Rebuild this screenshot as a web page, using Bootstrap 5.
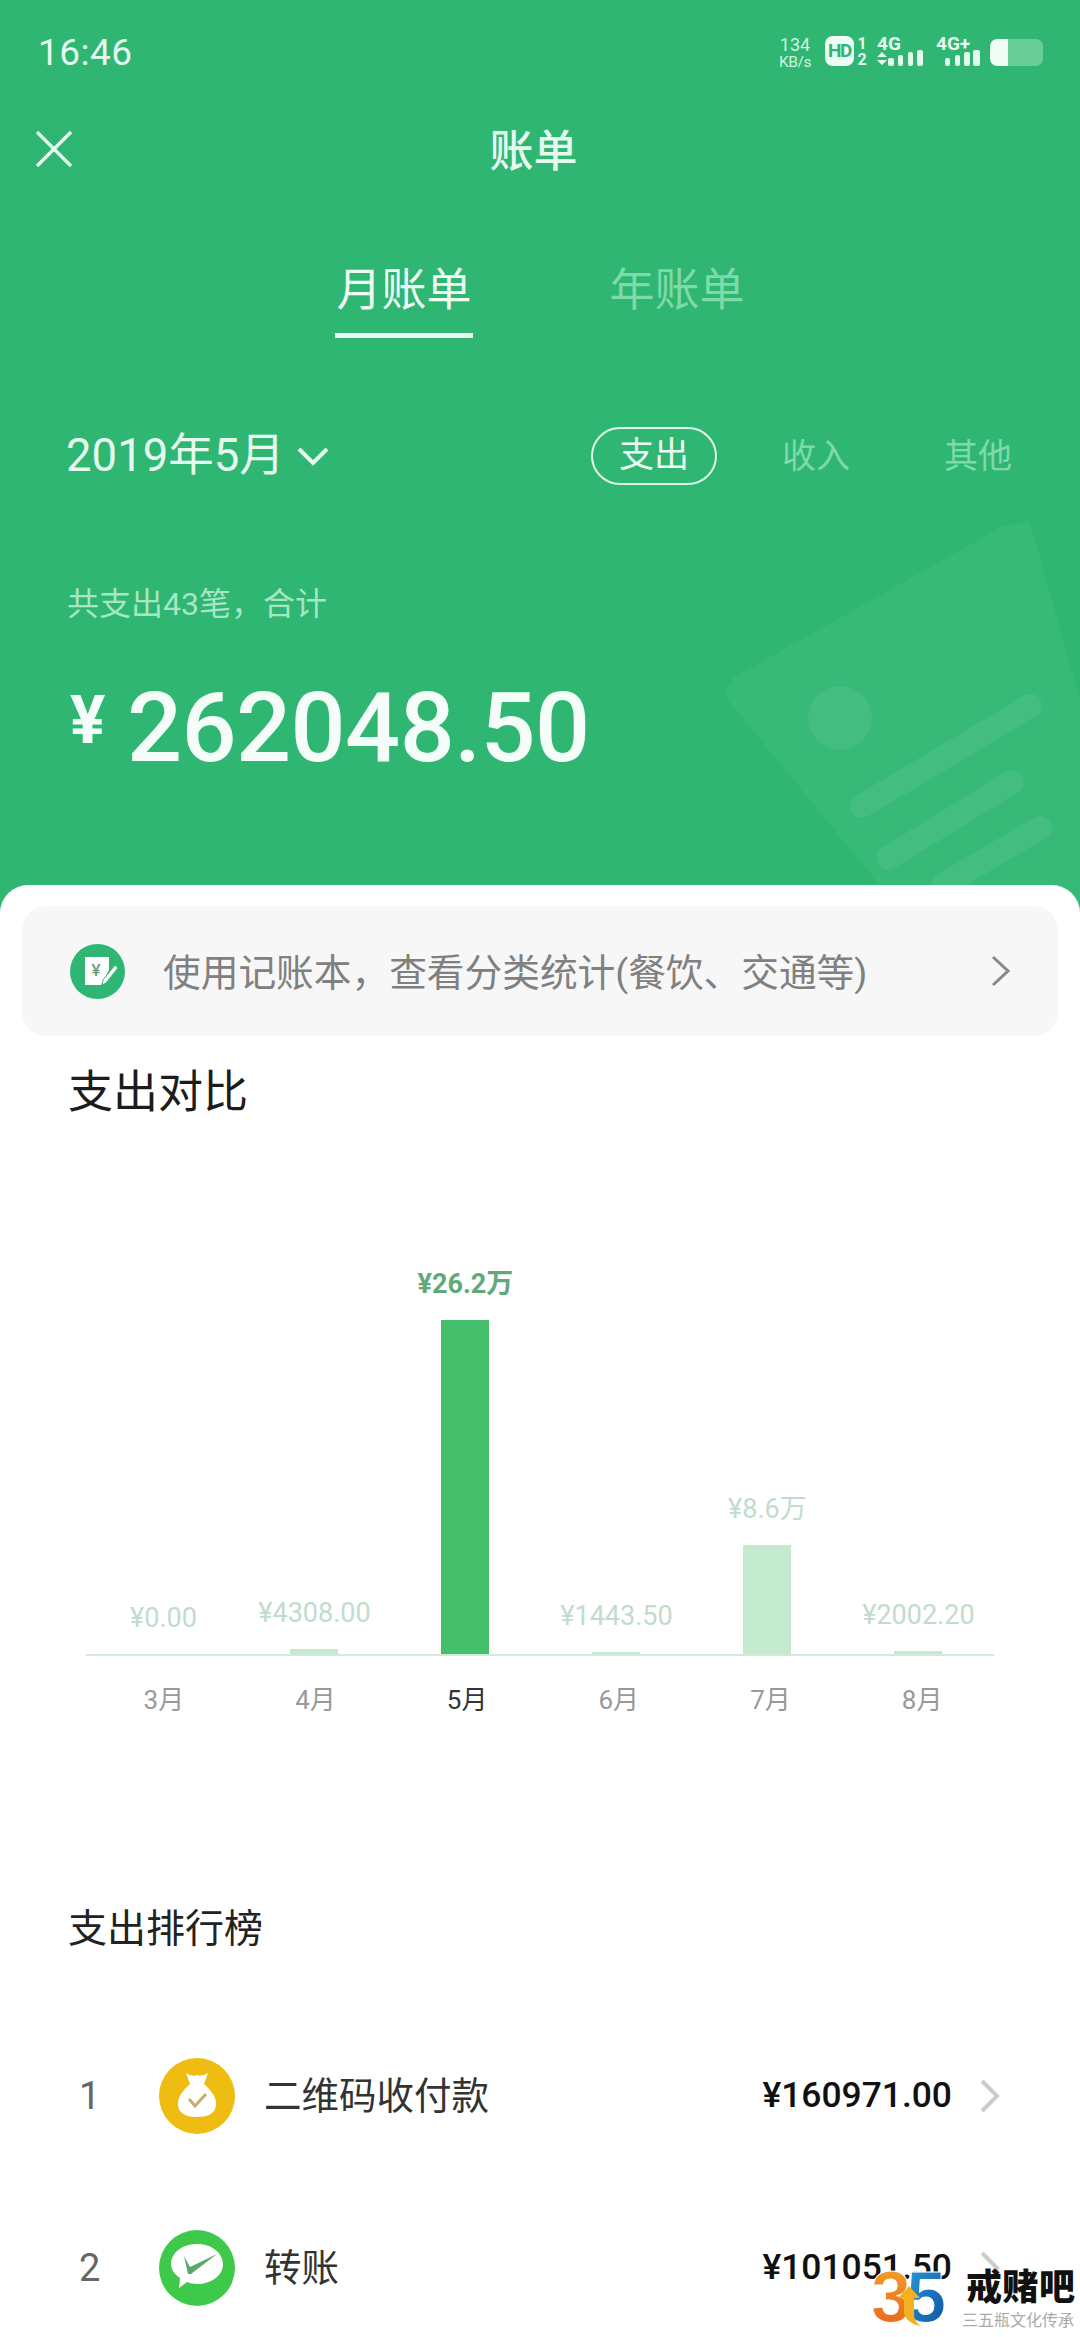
<!DOCTYPE html>
<html lang="zh-CN">
<head>
  <meta charset="UTF-8" />
  <meta name="viewport" content="width=device-width, initial-scale=1.0" />
  <title>账单</title>
  <link href="https://cdn.jsdelivr.net/npm/bootstrap@5.3.0/dist/css/bootstrap.min.css" rel="stylesheet" />
  <style>
    html, body { margin: 0; background: #fff; }
    body { font-family: Roboto, "Noto Sans CJK SC", sans-serif; }
    .app-frame { width: 1080px; height: 2337px; overflow: hidden; position: relative; background: #fff; }

    /* green header, runs on behind the rounded top of the sheet */
    .bill-head { height: 920px; background: #2eb672; color: #e6f9ee; position: relative; overflow: hidden; }
    .bill-deco { position: absolute; left: 0; top: 0; }
    .status-row { height: 106px; padding: 36px 37px 0 38px; }
    .status-time { font-size: 37px; line-height: 34px; letter-spacing: .5px; }
    .status-speed { width: 34px; font-size: 18px; line-height: 17px; text-align: center; color: #d3f3e0; white-space: nowrap; }
    .status-speed span { display: block; }
    .status-speed .speed-unit { margin-top: 1px; font-size: 15.5px; letter-spacing: -.5px; }
    .hd-chip { width: 29px; height: 30px; margin-left: 13px; border-radius: 8px; background: #eefbf3; color: #2eb672; font-size: 19px; font-weight: 700; line-height: 30px; text-align: center; letter-spacing: -1.5px; }
    .sim-nums { width: 10px; margin-left: 3px; font-size: 16px; font-weight: 700; line-height: 16px; text-align: center; }
    .batt-box { width: 53px; height: 27px; margin: 3px 0 0 10px; border-radius: 7px; background: #69cd98; overflow: hidden; }
    .batt-fill { width: 18px; height: 100%; background: #f1fcf5; border-radius: 7px 0 0 7px; }

    .nav-row { height: 86px; padding-left: 35px; }
    .nav-title { flex: 1; margin-right: 86px; padding-top: 5px; font-size: 44px; line-height: 60px; text-align: center; font-weight: 500; }

    .tab-row { margin-top: 69px; padding-left: 335px; }
    .tab-item { width: 138px; padding-bottom: 12px; border-bottom: 5px solid transparent; font-size: 45px; line-height: 60px; text-align: center; color: #7fd9a9; }
    .tab-item + .tab-item { margin-left: 135px; }
    .tab-item.is-on { color: #eefbf3; border-bottom-color: #eefbf3; }

    .filter-row { margin-top: 89px; height: 58px; padding: 0 68px 0 66px; }
    .filter-month { font-size: 45.5px; line-height: 60px; }
    .filter-chev { margin-left: 12px; }
    .filter-pill { width: 126px; height: 58px; padding: 0; margin-right: 65px; border: 2px solid #dff7e9; border-radius: 29px; background: transparent; color: #eefbf3; font-size: 35px; line-height: 54px; }
    .filter-off { font-size: 34px; line-height: 60px; color: #7fd9a9; }
    .filter-off + .filter-off { margin-left: 94px; }

    .sum-note { margin: 97px 0 0 67px; font-size: 32px; line-height: 44px; color: #a6e6c4; }
    .sum-total { margin: 47px 0 0 70px; height: 110px; color: #f4fdf8; }
    .sum-yen { width: 36px; font-size: 66px; line-height: 60px; margin-top: 18px; font-weight: 700; }
    .sum-num { margin-left: 21px; font-size: 97px; line-height: 110px; font-weight: 500; letter-spacing: -.6px; }

    /* white sheet */
    .bill-sheet { position: absolute; left: 0; right: 0; top: 885px; bottom: 0; padding-top: 21px; background: #fff; border-radius: 28px 28px 0 0; }
    .book-tip { height: 130px; margin: 0 22px; padding: 0 47px 0 48px; border-radius: 24px; background: #f7f7f7; }
    .book-text { margin-left: 38px; padding-top: 4px; font-size: 37.7px; color: #808080; white-space: nowrap; }
    .sect-title { margin: 27px 0 0 68px; font-size: 45px; line-height: 60px; color: #1c1c1c; }

    .chart-plot { height: 533px; margin-left: 86px; width: 908px; padding-left: 2px; border-bottom: 2px solid #d5e8dc; }
    .chart-col { display: flex; flex-direction: column; align-items: center; justify-content: flex-end; height: 100%; }
    .chart-val { margin-bottom: 20px; font-size: 27px; line-height: 32px; color: #c2dccb; white-space: nowrap; }
    .chart-val.is-on { color: #5fa97a; font-weight: 700; }
    .chart-bar { width: 48px; background: #c4ead0; }
    .chart-bar.is-on { background: #45bf6c; }
    .chart-months { margin: 26px 0 0 88px; width: 910px; }
    .chart-mon { font-size: 26px; line-height: 36px; text-align: center; color: #999; }
    .chart-mon.is-on { color: #333; }

    .rank-title { margin: 183px 0 0 68px; font-size: 39px; line-height: 56px; color: #222; }
    .rank-list { margin-top: 53px; }
    .rank-item { height: 172px; padding: 0 80px 0 79px; border: 0; }
    .rank-no { width: 80px; font-size: 38px; color: #666; }
    .rank-name { margin-left: 29px; font-size: 37.5px; color: #333; }
    .rank-amt { margin-left: auto; margin-right: 28px; font-size: 35.4px; font-weight: 500; color: #111; }

    /* site stamp over the last row */
    .site-stamp { position: absolute; left: 871px; top: 2270px; }
    .stamp-words { margin-left: 12px; padding-left: 7px; width: 122px; height: 67px; background: #fff; }
    .stamp-name { font-size: 36px; line-height: 36px; font-weight: 900; color: #111; letter-spacing: .5px; white-space: nowrap; }
    .stamp-sub { margin-top: 5px; margin-left: -4px; font-family: "Liberation Serif", "Noto Sans CJK SC", serif; font-size: 16px; line-height: 20px; color: #aaa; white-space: nowrap; }
  </style>
</head>
<body>
  <div class="app-frame">
    <div class="bill-head">
      <svg class="bill-deco" width="1080" height="920" viewBox="0 0 1080 920">
        <path d="M1003 526 L1030 522 L1080 700 L1080 920 L908 920 L728 700 Q722 686 736 676 Z" fill="#37b977" />
        <circle cx="840" cy="718" r="32" fill="#43bd80" />
        <g stroke="#43bd80" stroke-width="24" stroke-linecap="round">
          <line x1="1030" y1="706" x2="862" y2="806" />
          <line x1="1012" y1="782" x2="888" y2="858" />
          <line x1="1040" y1="828" x2="944" y2="884" />
        </g>
      </svg>

      <div class="position-relative">
        <div class="status-row d-flex align-items-start">
          <div class="status-time me-auto">16:46</div>
          <div class="status-speed"><span>134</span><span class="speed-unit">KB/s</span></div>
          <div class="hd-chip">HD</div>
          <div class="sim-nums">1<br />2</div>
          <svg width="46" height="30" viewBox="0 0 46 30" style="margin-left:10px">
            <text x="0" y="14" font-family="Roboto, sans-serif" font-size="19" font-weight="700" fill="#e6f9ee">4G</text>
            <path d="M0 21 L5 16 L10 21 Z M0 24 L10 24 L5 29 Z" fill="#e6f9ee" />
            <g fill="#e6f9ee"><rect x="11" y="22" width="6" height="8" rx="2" /><rect x="21" y="19" width="5" height="11" rx="2" /><rect x="31" y="16" width="5" height="14" rx="2" /><rect x="40" y="14" width="6" height="16" rx="2" /></g>
          </svg>
          <svg width="44" height="30" viewBox="0 0 44 30" style="margin-left:13px">
            <text x="0" y="14" font-family="Roboto, sans-serif" font-size="19" font-weight="700" fill="#e6f9ee">4G+</text>
            <g fill="#e6f9ee"><rect x="9" y="22" width="5" height="8" rx="2" /><rect x="19" y="19" width="5" height="11" rx="2" /><rect x="28" y="16" width="6" height="14" rx="2" /><rect x="37" y="14" width="7" height="16" rx="2" /></g>
          </svg>
          <div class="batt-box"><div class="batt-fill"></div></div>
        </div>

        <div class="nav-row d-flex align-items-center">
          <svg width="38" height="38" viewBox="0 0 38 38" fill="none" stroke="#e6f9ee" stroke-width="3.4"><line x1="2" y1="2" x2="36" y2="36" /><line x1="36" y1="2" x2="2" y2="36" /></svg>
          <div class="nav-title">账单</div>
        </div>

        <div class="tab-row d-flex">
          <div class="tab-item is-on">月账单</div>
          <div class="tab-item">年账单</div>
        </div>

        <div class="filter-row d-flex align-items-center">
          <div class="filter-month">2019年5月</div>
          <svg class="filter-chev" width="32" height="20" viewBox="0 0 32 20" fill="none" stroke="#e6f9ee" stroke-width="4"><polyline points="2,3 16,17 30,3" /></svg>
          <button type="button" class="btn filter-pill ms-auto">支出</button>
          <div class="filter-off">收入</div>
          <div class="filter-off">其他</div>
        </div>

        <div class="sum-note">共支出43笔，合计</div>
        <div class="sum-total d-flex align-items-start">
          <div class="sum-yen">¥</div>
          <div class="sum-num">262048.50</div>
        </div>
      </div>
    </div>

    <div class="bill-sheet">
      <div class="book-tip d-flex align-items-center">
        <svg width="55" height="55" viewBox="0 0 55 55">
          <circle cx="27.5" cy="27.5" r="27.5" fill="#2eb672" />
          <path d="M15 13 H39 V26 L31 41 H15 Z" fill="#fff" />
          <text x="26" y="32" text-anchor="middle" font-family="Roboto, sans-serif" font-size="17" font-weight="500" fill="#6c9e83">¥</text>
          <path d="M33 36 L45 21 L48 24 L36 39 L32 41 Z" fill="#fff" stroke="#2eb672" stroke-width="1" />
        </svg>
        <div class="book-text">使用记账本，查看分类统计(餐饮、交通等)</div>
        <svg class="ms-auto" width="20" height="32" viewBox="0 0 20 32" fill="none" stroke="#888" stroke-width="3"><polyline points="2,2 17,16 2,30" /></svg>
      </div>

      <div class="sect-title">支出对比</div>

      <div class="chart-plot row g-0">
        <div class="col-2 chart-col"><div class="chart-val">¥0.00</div></div>
        <div class="col-2 chart-col"><div class="chart-val">¥4308.00</div><div class="chart-bar" style="height:5px"></div></div>
        <div class="col-2 chart-col"><div class="chart-val is-on">¥26.2万</div><div class="chart-bar is-on" style="height:334px"></div></div>
        <div class="col-2 chart-col"><div class="chart-val">¥1443.50</div><div class="chart-bar" style="height:2px"></div></div>
        <div class="col-2 chart-col"><div class="chart-val">¥8.6万</div><div class="chart-bar" style="height:109px"></div></div>
        <div class="col-2 chart-col"><div class="chart-val">¥2002.20</div><div class="chart-bar" style="height:3px"></div></div>
      </div>
      <div class="chart-months row g-0">
        <div class="col-2 chart-mon">3月</div>
        <div class="col-2 chart-mon">4月</div>
        <div class="col-2 chart-mon is-on">5月</div>
        <div class="col-2 chart-mon">6月</div>
        <div class="col-2 chart-mon">7月</div>
        <div class="col-2 chart-mon">8月</div>
      </div>

      <div class="rank-title">支出排行榜</div>

      <div class="list-group list-group-flush rank-list">
        <div class="list-group-item rank-item d-flex align-items-center">
          <div class="rank-no">1</div>
          <svg width="76" height="76" viewBox="0 0 76 76">
            <circle cx="38" cy="38" r="38" fill="#efbc12" />
            <path d="M27 15 Q33 19 38 17 Q43 19 49 15 L45 26 Q58 37 57 47 Q56 59 38 59 Q20 59 19 47 Q18 37 31 26 Z" fill="#fff" />
            <polyline points="30,41 36,48 47,36" fill="none" stroke="#c4b26a" stroke-width="3" />
          </svg>
          <div class="rank-name">二维码收付款</div>
          <div class="rank-amt">¥160971.00</div>
          <svg width="20" height="34" viewBox="0 0 20 34" fill="none" stroke="#ccc" stroke-width="4"><polyline points="2,2 17,17 2,32" /></svg>
        </div>
        <div class="list-group-item rank-item d-flex align-items-center">
          <div class="rank-no">2</div>
          <svg width="76" height="76" viewBox="0 0 76 76">
            <circle cx="38" cy="38" r="38" fill="#3fc94a" />
            <path d="M38 14 C54 14 64 24 64 34 C64 46 52 54 38 54 C34 54 31 53 28 52 L20 58 L21 48 C15 44 12 39 12 34 C12 24 22 14 38 14 Z" fill="#fff" />
            <path d="M25 26 L31 37 L58 24 L32 44 L29 44 Z" fill="#5aa96a" />
          </svg>
          <div class="rank-name">转账</div>
          <div class="rank-amt">¥101051.50</div>
          <svg width="20" height="34" viewBox="0 0 20 34" fill="none" stroke="#ccc" stroke-width="4"><polyline points="2,2 17,17 2,32" /></svg>
        </div>
      </div>
    </div>

    <div class="site-stamp d-flex align-items-start">
      <svg width="76" height="58" viewBox="0 0 76 58">
        <defs>
          <linearGradient id="stampOrange" x1="0" y1="0" x2="0" y2="1"><stop offset="0" stop-color="#f4a62a" /><stop offset="1" stop-color="#e65f1c" /></linearGradient>
          <linearGradient id="stampBlue" x1="0" y1="0" x2="1" y2="1"><stop offset="0" stop-color="#2a9fdc" /><stop offset="1" stop-color="#0e4f9e" /></linearGradient>
        </defs>
        <text x="0" y="52" font-family="Liberation Sans, sans-serif" font-size="72" font-weight="700" fill="url(#stampOrange)" stroke="#fff" stroke-width="1">3</text>
        <text x="35" y="52" font-family="Liberation Sans, sans-serif" font-size="72" font-weight="700" fill="url(#stampBlue)" stroke="#fff" stroke-width="1">5</text>
        <path d="M38 16 L49 28 L43 28 L43 44 Q43 52 50 56 Q37 54 33 44 L33 28 L27 28 Z" fill="#f5b01f" />
      </svg>
      <div class="stamp-words">
        <div class="stamp-name">戒赌吧</div>
        <div class="stamp-sub">三五瓶文化传承</div>
      </div>
    </div>
  </div>

  <script src="https://cdn.jsdelivr.net/npm/bootstrap@5.3.0/dist/js/bootstrap.bundle.min.js"></script>
</body>
</html>
